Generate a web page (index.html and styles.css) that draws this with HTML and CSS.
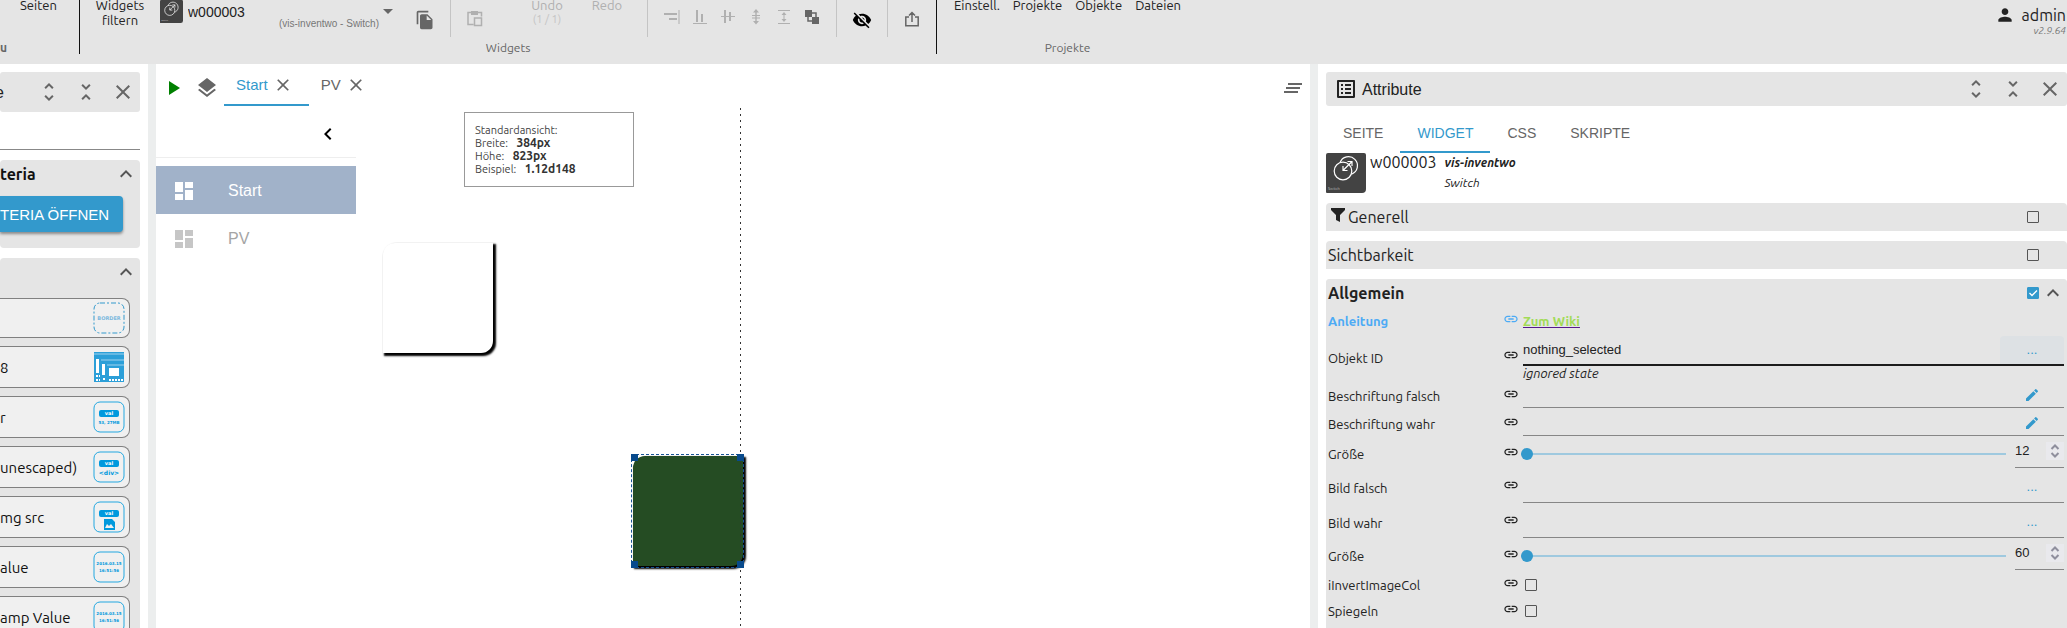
FILE: index.html
```
<!DOCTYPE html>
<html lang="de">
<head>
    <meta charset="UTF-8">
    <meta name="viewport" content="width=device-width, initial-scale=1.0">
    <title>vis-2</title>
    <link rel="stylesheet" href="styles.css">
</head>
<body>
    <svg class="sprite" aria-hidden="true">
        <symbol id="close" viewBox="0 0 24 24"><path d="M19 6.41L17.59 5 12 10.59 6.41 5 5 6.41 10.59 12 5 17.59 6.41 19 12 13.41 17.59 19 19 17.59 13.41 12z"/></symbol>
        <symbol id="more" viewBox="0 0 24 24"><path d="M12 5.83L15.17 9l1.41-1.41L12 3 7.41 7.59 8.83 9 12 5.83zm0 12.34L8.83 15l-1.41 1.41L12 21l4.59-4.59L15.17 15 12 18.17z"/></symbol>
        <symbol id="less" viewBox="0 0 24 24"><path d="M7.41 18.59L8.83 20 12 16.83 15.17 20l1.41-1.41L12 14l-4.59 4.59zm9.18-13.18L15.17 4 12 7.17 8.83 4 7.41 5.41 12 10l4.59-4.59z"/></symbol>
        <symbol id="up" viewBox="0 0 24 24"><path d="M12 8l-6 6 1.41 1.41L12 10.83l4.59 4.58L18 14z"/></symbol>
        <symbol id="left" viewBox="0 0 24 24"><path d="M15.41 7.41L14 6l-6 6 6 6 1.41-1.41L10.83 12z"/></symbol>
        <symbol id="link" viewBox="0 0 24 24"><path d="M3.9 12c0-1.71 1.39-3.1 3.1-3.1h4V7H7c-2.76 0-5 2.24-5 5s2.24 5 5 5h4v-1.9H7c-1.71 0-3.1-1.39-3.1-3.1zM8 13h8v-2H8v2zm9-6h-4v1.9h4c1.71 0 3.1 1.39 3.1 3.1s-1.39 3.1-3.1 3.1h-4V17h4c2.76 0 5-2.24 5-5s-2.24-5-5-5z"/></symbol>
        <symbol id="edit" viewBox="0 0 24 24"><path d="M3 17.25V21h3.75L17.81 9.94l-3.75-3.75L3 17.25zM20.71 7.04c.39-.39.39-1.02 0-1.41l-2.34-2.34a1 1 0 00-1.41 0l-1.83 1.83 3.75 3.75 1.83-1.83z"/></symbol>
        <symbol id="board" viewBox="0 0 24 24"><path d="M3 13h8V3H3v10zm0 8h8v-6H3v6zm10 0h8V11h-8v10zm0-18v6h8V3h-8z"/></symbol>
        <symbol id="switch" viewBox="0 0 40 40">
            <path d="M2 0h36a2 2 0 0 1 2 2v34a4 4 0 0 1-4 4H1a1 1 0 0 1-1-1V2a2 2 0 0 1 2-2z" fill="#434343"/>
            <g fill="none" stroke="#fff" stroke-width="1.2">
                <circle cx="17" cy="18" r="8.800"/>
                <path d="M14 9.700a9 9 0 1 1 11.500 11.500"/>
                <path d="M17 17.500L26 8.500m-4.500 0H26V13M17 13v4.500h4.500"/>
            </g>
            <text x="2" y="37" font-size="4" fill="#bbb">Switch</text>
        </symbol>
    </svg>

    <header class="toolbar">
        <div class="group group-menu">
            <div class="tools"><button class="tool">Seiten</button></div>
            <div class="group-name">u</div>
        </div>
        <div class="group group-widgets">
            <div class="tools">
                <button class="tool tool-filter">Widgets filtern</button>
                <div class="picker">
                    <svg class="picker-icon"><use href="#switch"/></svg>
                    <select class="picker-select" aria-label="Widget">
                        <option>w000003</option>
                    </select>
                    <span class="picker-type">(vis-inventwo - Switch)</span>
                    <svg class="picker-caret" viewBox="0 0 10 5"><path d="M0 0h10L5 5z"/></svg>
                </div>
                <button class="tool tool-icon tool-wide" aria-label="Kopieren">
                    <svg class="icon-20" viewBox="0 0 24 24"><path d="M16 1H4c-1.1 0-2 .9-2 2v14h2V3h12V1zm-1 4l6 6v10c0 1.1-.9 2-2 2H7.99C6.89 23 6 22.1 6 21l.01-14c0-1.1.89-2 1.99-2h7zm-1 7h5.5L14 6.5V12z"/></svg>
                </button>
                <span class="line"></span>
                <button class="tool tool-icon" disabled aria-label="Einfügen">
                    <svg class="icon-18" viewBox="0 0 18 18"><path d="M5.500 2.500H2v12h5.500M12 2.500h3.500v4M8.500 8h7v7.500h-7z" fill="none" stroke="currentColor" stroke-width="1.500"/><path d="M5 1h7v4H5z"/></svg>
                </button>
                <button class="tool tool-undo" disabled>Undo<small>(1 / 1)</small></button>
                <button class="tool tool-redo" disabled>Redo</button>
                <span class="line"></span>
                <div class="aligns">
                    <button class="tool tool-align" disabled aria-label="Rechts ausrichten"><svg class="icon-16" viewBox="0 0 16 16"><path d="M14.500 1h1v14h-1zM0 4h13v2H0zM5 9h8v2H5z"/></svg></button>
                    <button class="tool tool-align" disabled aria-label="Unten ausrichten"><svg class="icon-16" viewBox="0 0 16 16"><path d="M1 14h14v1H1zM4 1h2v12H4zM9 5h2v8H9z"/></svg></button>
                    <button class="tool tool-align" disabled aria-label="Mitte ausrichten"><svg class="icon-16" viewBox="0 0 16 16"><path d="M1 7h14v1H1zM4 1h2v13H4zM9 3h2v9H9z"/></svg></button>
                    <button class="tool tool-align" disabled aria-label="Höhe verteilen"><svg class="icon-16" viewBox="0 0 16 16"><path d="M4 6h8v1H4zM4 8.500h8v1H4zM7.300 3h1.400v10H7.300zM8 0l3 3.500H5zM8 15.500L5 12h6z"/></svg></button>
                    <button class="tool tool-align" disabled aria-label="Gleiche Höhe"><svg class="icon-16" viewBox="0 0 16 16"><path d="M2 1h12v1H2zM2 14h12v1H2zM7.500 5h1v6h-1zM8 3l2.500 3h-5zM8 13l-2.500-3h5z"/></svg></button>
                    <button class="tool tool-align" aria-label="Reihenfolge"><svg class="icon-16" viewBox="0 0 16 16"><path d="M1 1h7v7H1zM8 8h7v7H8z"/><path d="M8 4h4v4M4 8v4h4" fill="none" stroke="currentColor" stroke-width="1.500"/></svg></button>
                </div>
                <span class="line"></span>
                <button class="tool tool-icon tool-eye" aria-label="Ausblenden">
                    <svg class="icon-20" viewBox="0 0 24 24"><path d="M12 7c2.76 0 5 2.24 5 5 0 .65-.13 1.26-.36 1.83l2.92 2.92c1.51-1.26 2.7-2.89 3.43-4.75-1.73-4.39-6-7.5-11-7.5-1.4 0-2.74.25-3.98.7l2.16 2.16C10.74 7.13 11.35 7 12 7zM2 4.27l2.28 2.28.46.46C3.08 8.3 1.78 10.02 1 12c1.73 4.39 6 7.5 11 7.5 1.55 0 3.03-.3 4.38-.84l.42.42L19.73 22 21 20.73 3.27 3 2 4.27zM7.53 9.8l1.55 1.55c-.05.21-.08.43-.08.65 0 1.66 1.34 3 3 3 .22 0 .44-.03.65-.08l1.55 1.55c-.67.33-1.41.53-2.2.53-2.76 0-5-2.24-5-5 0-.79.2-1.53.53-2.2zm4.31-.78l3.15 3.15.02-.16c0-1.66-1.34-3-3-3l-.17.01z"/></svg>
                </button>
                <span class="line"></span>
                <button class="tool tool-icon" aria-label="Exportieren">
                    <svg class="icon-16" viewBox="0 0 16 16"><path d="M5 6H1.800v8.800h12.400V6H11M8 11V2M5 4.500l3-3 3 3" fill="none" stroke="currentColor" stroke-width="1.500"/></svg>
                </button>
            </div>
            <div class="group-name">Widgets</div>
        </div>
        <div class="group group-projects">
            <div class="tools">
                <button class="tool">Einstell.</button>
                <button class="tool">Projekte</button>
                <button class="tool">Objekte</button>
                <button class="tool">Dateien</button>
            </div>
            <div class="group-name">Projekte</div>
        </div>
        <div class="user">
            <svg class="icon-20" viewBox="0 0 24 24"><path d="M12 12c2.21 0 4-1.79 4-4s-1.79-4-4-4-4 1.79-4 4 1.79 4 4 4zm0 2c-2.67 0-8 1.34-8 4v2h16v-2c0-2.66-5.33-4-8-4z"/></svg>
            <div class="user-text">
                <span class="user-name">admin</span>
                <span class="version">v2.9.64</span>
            </div>
        </div>
    </header>

    <main class="workspace">
        <aside class="palette">
            <div class="panel-head palette-head">
                <span class="panel-title">e</span>
                <button class="icon-btn" aria-label="Alle öffnen"><svg class="icon-24"><use href="#more"/></svg></button>
                <button class="icon-btn" aria-label="Alle schließen"><svg class="icon-24"><use href="#less"/></svg></button>
                <button class="icon-btn" aria-label="Schließen"><svg class="icon-24"><use href="#close"/></svg></button>
            </div>
            <input class="search" type="text" aria-label="Suche">
            <section class="set set-first">
                <div class="set-head">
                    <h2>teria</h2>
                    <svg class="icon-24"><use href="#up"/></svg>
                </div>
                <button class="open-btn">TERIA ÖFFNEN</button>
            </section>
            <section class="set">
                <div class="set-head">
                    <h2></h2>
                    <svg class="icon-24"><use href="#up"/></svg>
                </div>
                <ul class="widgets">
                    <li>
                        <span></span>
                        <svg class="thumb" viewBox="0 0 32 32">
                            <rect x="1" y="1" width="30" height="30" rx="6" fill="none" stroke="#3399cc" stroke-dasharray="5 2 2 2"/>
                            <text x="16" y="18" font-size="5" fill="#7db9de">BORDER</text>
                        </svg>
                    </li>
                    <li>
                        <span>8</span>
                        <svg class="thumb" viewBox="0 0 32 32">
                            <path d="M1 1h30v30H1z" fill="#2c9fd8"/>
                            <path d="M1 3h30M8 9h23M14 14h17" stroke="#9ed2ee"/>
                            <path d="M3 8h3v14H3zM9 13h3v11H9zM16 17h10v8H16z" fill="#fff"/>
                            <path d="M3 25h4M3 29h4M10 28h3M16 29h14" stroke="#fff" stroke-width="2" stroke-dasharray="2 1"/>
                        </svg>
                    </li>
                    <li>
                        <span>r</span>
                        <svg class="thumb" viewBox="0 0 32 32">
                            <rect class="thumb-frame" x="1" y="1" width="30" height="30" rx="6"/>
                            <rect x="6" y="9" width="20" height="7" rx="2" fill="#0099dd"/>
                            <text x="16" y="14" font-size="5" fill="#fff">val</text>
                            <text x="16" y="23" font-size="4" fill="#0099dd">53, 27MB</text>
                        </svg>
                    </li>
                    <li>
                        <span>unescaped)</span>
                        <svg class="thumb" viewBox="0 0 32 32">
                            <rect class="thumb-frame" x="1" y="1" width="30" height="30" rx="6"/>
                            <rect x="6" y="9" width="20" height="7" rx="2" fill="#0099dd"/>
                            <text x="16" y="14" font-size="5" fill="#fff">val</text>
                            <text x="16" y="24" font-size="6" fill="#0099dd">&lt;div&gt;</text>
                        </svg>
                    </li>
                    <li>
                        <span>mg src</span>
                        <svg class="thumb" viewBox="0 0 32 32">
                            <rect class="thumb-frame" x="1" y="1" width="30" height="30" rx="6"/>
                            <rect x="6" y="9" width="20" height="7" rx="2" fill="#0099dd"/>
                            <text x="16" y="14" font-size="5" fill="#fff">val</text>
                            <path d="M11 18h8l3 3v8H11zM12 27h9l-3-4-2 2-2-2z" fill="#0099dd" fill-rule="evenodd"/>
                        </svg>
                    </li>
                    <li>
                        <span>alue</span>
                        <svg class="thumb" viewBox="0 0 32 32">
                            <rect class="thumb-frame" x="1" y="1" width="30" height="30" rx="6"/>
                            <text x="16" y="14" font-size="4" fill="#0099dd">2016.03.15</text>
                            <text x="16" y="21" font-size="4" fill="#0099dd">16:51:56</text>
                        </svg>
                    </li>
                    <li>
                        <span>amp Value</span>
                        <svg class="thumb" viewBox="0 0 32 32">
                            <rect class="thumb-frame" x="1" y="1" width="30" height="30" rx="6"/>
                            <text x="16" y="14" font-size="4" fill="#0099dd">2016.03.15</text>
                            <text x="16" y="21" font-size="4" fill="#0099dd">16:51:56</text>
                        </svg>
                    </li>
                </ul>
            </section>
        </aside>

        <div class="splitter"></div>

        <section class="editor">
            <nav class="views">
                <button class="icon-btn play" aria-label="Start"><svg class="icon-24" viewBox="0 0 24 24"><path d="M7 5v14l11-7z"/></svg></button>
                <button class="icon-btn layers" aria-label="Ansichten"><svg class="icon-24" viewBox="0 0 24 24"><path d="M11.99 18.54l-7.37-5.73L3 14.07l9 7 9-7-1.63-1.27-7.38 5.74zM12 16l7.36-5.73L21 9l-9-7-9 7 1.63 1.27L12 16z"/></svg></button>
                <button class="view view-active">Start<svg class="icon-20"><use href="#close"/></svg></button>
                <button class="view">PV<svg class="icon-20"><use href="#close"/></svg></button>
                <button class="icon-btn view-menu" aria-label="Menü"><svg class="icon-24" viewBox="0 0 24 24"><path d="M5 13h14v-2H5v2zm-2 4h14v-2H3v2zM7 7v2h14V7H7z"/></svg></button>
            </nav>
            <div class="canvas">
                <div class="nav-menu">
                    <div class="nav-top">
                        <button class="icon-btn" aria-label="Menü einklappen"><svg class="icon-24"><use href="#left"/></svg></button>
                    </div>
                    <a class="nav-item nav-active" href="#start"><svg class="icon-24"><use href="#board"/></svg>Start</a>
                    <a class="nav-item" href="#pv"><svg class="icon-24"><use href="#board"/></svg>PV</a>
                </div>
                <div class="stage">
                    <div class="info">
                        Standardansicht:<br>
                        Breite: <b>384px</b><br>
                        Höhe: <b>823px</b><br>
                        Beispiel: <b>1.12d148</b>
                    </div>
                    <div class="tile tile-white"></div>
                    <div class="tile tile-green"></div>
                    <div class="limit"></div>
                    <div class="selection">
                        <i class="handle handle-tl"></i>
                        <i class="handle handle-tr"></i>
                        <i class="handle handle-bl"></i>
                        <i class="handle handle-br"></i>
                    </div>
                </div>
            </div>
        </section>

        <div class="splitter"></div>

        <aside class="attributes">
            <div class="panel-head">
                <svg class="icon-24 list-icon" viewBox="0 0 24 24"><path d="M19 5v14H5V5h14m1.1-2H3.9c-.5 0-.9.4-.9.9v16.2c0 .4.4.9.9.9h16.2c.4 0 .9-.5.9-.9V3.9c0-.5-.5-.9-.9-.9zM11 7h6v2h-6V7zm0 4h6v2h-6v-2zm0 4h6v2h-6zM7 7h2v2H7zm0 4h2v2H7zm0 4h2v2H7z"/></svg>
                <span class="panel-title">Attribute</span>
                <button class="icon-btn" aria-label="Alle öffnen"><svg class="icon-24"><use href="#more"/></svg></button>
                <button class="icon-btn" aria-label="Alle schließen"><svg class="icon-24"><use href="#less"/></svg></button>
                <button class="icon-btn" aria-label="Schließen"><svg class="icon-24"><use href="#close"/></svg></button>
            </div>
            <nav class="tabs">
                <button class="tab">SEITE</button>
                <button class="tab tab-active">WIDGET</button>
                <button class="tab">CSS</button>
                <button class="tab">SKRIPTE</button>
            </nav>
            <div class="selected">
                <svg class="selected-icon"><use href="#switch"/></svg>
                <span class="selected-id">w000003</span>
                <div class="selected-type"><b>vis-inventwo</b><span>Switch</span></div>
            </div>

            <label class="bar">
                <svg class="funnel" viewBox="0 0 14 14"><path d="M0 0h14v2L9 7v7l-4-2V7L0 2z"/></svg>
                <span class="bar-name">Generell</span>
                <input type="checkbox">
            </label>
            <label class="bar">
                <span class="bar-name">Sichtbarkeit</span>
                <input type="checkbox">
            </label>

            <section class="fields">
                <label class="bar bar-open">
                    <span class="bar-name">Allgemein</span>
                    <input type="checkbox" checked>
                    <svg class="icon-24"><use href="#up"/></svg>
                </label>
                <div class="field field-help">
                    <span class="field-name">Anleitung</span>
                    <svg class="icon-16"><use href="#link"/></svg>
                    <a class="wiki" href="#wiki">Zum Wiki</a>
                </div>
                <div class="field field-object">
                    <label class="field-name" for="oid">Objekt ID</label>
                    <svg class="icon-16"><use href="#link"/></svg>
                    <div class="control-object">
                        <div class="control control-focus">
                            <input id="oid" type="text" value="nothing_selected">
                            <button class="pick">...</button>
                        </div>
                        <span class="hint">ignored state</span>
                    </div>
                </div>
                <div class="field">
                    <label class="field-name" for="textFalse">Beschriftung falsch</label>
                    <svg class="icon-16"><use href="#link"/></svg>
                    <div class="control">
                        <input id="textFalse" type="text">
                        <button class="pick" aria-label="Bearbeiten"><svg class="icon-16"><use href="#edit"/></svg></button>
                    </div>
                </div>
                <div class="field">
                    <label class="field-name" for="textTrue">Beschriftung wahr</label>
                    <svg class="icon-16"><use href="#link"/></svg>
                    <div class="control">
                        <input id="textTrue" type="text">
                        <button class="pick" aria-label="Bearbeiten"><svg class="icon-16"><use href="#edit"/></svg></button>
                    </div>
                </div>
                <div class="field field-slider">
                    <label class="field-name" for="textSize">Größe</label>
                    <svg class="icon-16"><use href="#link"/></svg>
                    <div class="slider">
                        <input class="range" id="textSize" type="range" min="12" max="200" value="12">
                        <div class="number">
                            <input type="number" value="12" aria-label="Größe">
                            <svg class="spin" viewBox="0 0 17 18"><path d="M5 7l3.500-3.500L12 7M5 11l3.500 3.500L12 11"/></svg>
                        </div>
                    </div>
                </div>
                <div class="field field-image">
                    <label class="field-name" for="imageFalse">Bild falsch</label>
                    <svg class="icon-16"><use href="#link"/></svg>
                    <div class="control">
                        <input id="imageFalse" type="text">
                        <button class="pick">...</button>
                    </div>
                </div>
                <div class="field field-image">
                    <label class="field-name" for="imageTrue">Bild wahr</label>
                    <svg class="icon-16"><use href="#link"/></svg>
                    <div class="control">
                        <input id="imageTrue" type="text">
                        <button class="pick">...</button>
                    </div>
                </div>
                <div class="field field-slider">
                    <label class="field-name" for="imageSize">Größe</label>
                    <svg class="icon-16"><use href="#link"/></svg>
                    <div class="slider">
                        <input class="range" id="imageSize" type="range" min="60" max="200" value="60">
                        <div class="number">
                            <input type="number" value="60" aria-label="Größe">
                            <svg class="spin" viewBox="0 0 17 18"><path d="M5 7l3.500-3.500L12 7M5 11l3.500 3.500L12 11"/></svg>
                        </div>
                    </div>
                </div>
                <div class="field field-check">
                    <label class="field-name" for="invert">iInvertImageCol</label>
                    <svg class="icon-16"><use href="#link"/></svg>
                    <input id="invert" type="checkbox">
                </div>
                <div class="field field-check">
                    <label class="field-name" for="mirror">Spiegeln</label>
                    <svg class="icon-16"><use href="#link"/></svg>
                    <input id="mirror" type="checkbox">
                </div>
            </section>
        </aside>
    </main>
</body>
</html>
```

FILE: styles.css
```
* {
    box-sizing: border-box;
}
body {
    margin: 0;
    height: 100vh;
    overflow: hidden;
    display: flex;
    flex-direction: column;
    background: #fff;
    color: #222;
    font-family: Ubuntu, "Noto Sans", sans-serif;
    font-size: 13px;
}
button, input, select {
    font: inherit;
    color: inherit;
    border: none;
    background: none;
    padding: 0;
    margin: 0;
    min-width: 0;
}
button {
    cursor: pointer;
}
svg {
    fill: currentColor;
    flex: none;
    display: block;
}
.sprite {
    display: none;
}
.icon-16 {
    width: 16px;
    height: 16px;
}
.icon-18 {
    width: 18px;
    height: 18px;
}
.icon-20 {
    width: 20px;
    height: 20px;
}
.icon-24 {
    width: 24px;
    height: 24px;
}
input[type="checkbox"] {
    appearance: none;
    width: 12px;
    height: 12px;
    border: 1px solid #555;
    border-radius: 1px;
    flex: none;
}
input[type="checkbox"]:checked {
    border-color: #3399cc;
    background: #3399cc url("data:image/svg+xml,%3Csvg xmlns='http://www.w3.org/2000/svg' viewBox='0 0 10 10'%3E%3Cpath d='M1.500 5l2.500 2.500 5-5' fill='none' stroke='white' stroke-width='1.300'/%3E%3C/svg%3E");
}

/* toolbar */
.toolbar {
    flex: none;
    height: 64px;
    display: flex;
    background: #e5e5e5;
    overflow: hidden;
}
.group {
    height: 54px;
    display: flex;
    flex-direction: column;
    border-right: 1px solid #111;
}
.group-menu {
    width: 80px;
}
.group-projects {
    border-right: none;
    padding: 0 12px;
}
.group-projects .tools {
    gap: 3px;
}
.tools {
    flex: none;
    height: 37px;
    display: flex;
}
.tool {
    display: block;
    align-self: flex-start;
    margin-top: -2px;
    font-size: 13px;
    line-height: 15px;
    text-align: center;
}
.tool:disabled {
    color: #b0b0b0;
}
.tool small {
    display: block;
    font-size: 11px;
    line-height: 12px;
    color: #c4c4c4;
}
.group-menu .tool {
    margin-left: 20px;
}
.group-projects .tool {
    padding: 0 5px;
}
.group-name {
    line-height: 22px;
    text-align: center;
    color: #666;
    font-size: 12px;
}
.group-menu .group-name {
    text-align: left;
    font-weight: bold;
}
.tool-filter {
    width: 80px;
    padding: 0 14px;
}
.picker {
    width: 234px;
    display: flex;
    font-family: "Liberation Sans", Arial, sans-serif;
}
.picker-icon {
    width: 23px;
    height: 23px;
}
.picker-select {
    appearance: none;
    width: 90px;
    height: 24px;
    margin-left: 5px;
    font-size: 14px;
}
.picker-type {
    font-size: 10px;
    line-height: 48px;
    color: #777;
    white-space: nowrap;
    text-align: right;
    flex: 1;
}
.picker-caret {
    width: 10px;
    height: 5px;
    margin: 9px 1px 0 4px;
    color: #666;
}
.tool-icon {
    width: 48px;
    height: 37px;
    margin-top: 0;
    display: flex;
    align-items: center;
    justify-content: center;
    color: #666;
}
.tool-wide {
    width: 56px;
    height: 40px;
    padding-left: 5px;
}
.tool-eye {
    width: 50px;
    height: 40px;
    color: #000;
}
.tool-undo {
    width: 60px;
    margin-left: 18px;
}
.tool-redo {
    width: 60px;
    margin-right: 10px;
}
.line {
    width: 1px;
    background: #c4c4c4;
}
.aligns {
    display: flex;
    padding: 0 10px;
}
.tool-align {
    width: 28px;
    height: 34px;
    margin-top: 0;
    display: flex;
    align-items: center;
    justify-content: center;
    color: #666;
}
.user {
    margin-left: auto;
    display: flex;
    padding: 5px 1px 0 0;
    gap: 7px;
}
.user-text {
    display: flex;
    flex-direction: column;
    align-items: flex-end;
}
.user-name {
    font-size: 16px;
    line-height: 20px;
}
.version {
    font-size: 10px;
    line-height: 11px;
    font-style: italic;
    color: #777;
}

/* columns */
.workspace {
    flex: 1;
    min-height: 0;
    display: grid;
    grid-template-columns: 148px 8px 1154fr 8px 749fr;
}
.splitter {
    background: #eceeee;
}
.palette, .editor, .attributes {
    min-width: 0;
    min-height: 0;
    overflow: hidden;
}
.palette {
    padding: 8px 8px 0 0;
}
.attributes {
    padding: 8px 0 0 8px;
}
.panel-head {
    height: 34px;
    display: flex;
    align-items: center;
    gap: 13px;
    padding-right: 5px;
    border-radius: 3px;
    background: #e5e5e5;
    font-family: "Liberation Sans", Arial, sans-serif;
}
.palette-head {
    height: 40px;
}
.panel-title {
    flex: 1;
    padding-top: 2px;
    font-size: 16px;
}
.list-icon {
    margin: 0 -9px 0 8px;
}
.icon-btn {
    color: #666;
}

/* widget palette */
.palette-head .panel-title {
    margin-left: -5px;
}
.search {
    display: block;
    width: 100%;
    height: 38px;
    border-bottom: 1px solid #888;
}
.set {
    margin-top: 10px;
    background: #e5e5e5;
    border-radius: 4px;
}
.set-first {
    height: 88px;
}
.set-head {
    height: 28px;
    display: flex;
    align-items: center;
    justify-content: space-between;
    padding-right: 2px;
    color: #555;
}
.set-head h2 {
    margin: 0;
    font-size: 16px;
    line-height: 24px;
    color: #111;
}
.set-first .set-head {
    margin-bottom: 8px;
}
.open-btn {
    display: block;
    width: 123px;
    height: 36px;
    padding-right: 16px;
    text-align: right;
    background: #3399cc;
    color: #fff;
    border-radius: 0 4px 4px 0;
    box-shadow: 0 2px 3px rgba(0, 0, 0, 0.4);
    font-family: "Liberation Sans", Arial, sans-serif;
    font-size: 15px;
    white-space: nowrap;
}
.widgets {
    list-style: none;
    margin: 0;
    padding: 12px 10px 0 0;
    display: flex;
    flex-direction: column;
    gap: 8px;
}
.widgets li {
    height: 42px;
    display: flex;
    align-items: center;
    justify-content: space-between;
    padding-right: 4px;
    border: 1px solid #808080;
    border-left: none;
    border-radius: 0 8px 8px 0;
    background: #f0f0f0;
    font-size: 15px;
    color: #111;
}
.widgets li:first-child {
    height: 40px;
}
.thumb {
    width: 32px;
    height: 32px;
    font-family: "DejaVu Sans", sans-serif;
    font-weight: bold;
    text-anchor: middle;
}
.thumb-frame {
    fill: none;
    stroke: #22a7e0;
}

/* editor */
.editor {
    display: flex;
    flex-direction: column;
}
.views {
    height: 42px;
    display: flex;
    align-items: stretch;
    font-family: "Liberation Sans", Arial, sans-serif;
    font-size: 15px;
    color: #666;
}
.views .icon-btn {
    padding-top: 5px;
}
.play {
    margin-left: 6px;
    color: #008000;
}
.layers {
    margin: 0 5px 0 9px;
}
.view {
    display: flex;
    align-items: center;
    gap: 5px;
    padding: 1px 16px 0 12px;
    border-bottom: 2px solid transparent;
}
.view-active {
    color: #3399cc;
    border-color: #3399cc;
}
.view svg {
    color: #666;
}
.view-menu {
    margin: 0 5px 0 auto;
}
.canvas {
    flex: 1;
    min-height: 0;
    display: flex;
}
.nav-menu {
    width: 200px;
    font-family: "Liberation Sans", Arial, sans-serif;
    font-size: 16px;
}
.nav-top {
    height: 52px;
    margin-bottom: 8px;
    display: flex;
    justify-content: flex-end;
    padding: 4px 16px 0 0;
    border-bottom: 1px solid #eee;
}
.nav-top .icon-btn {
    color: #000;
}
.nav-item {
    height: 48px;
    display: flex;
    align-items: center;
    gap: 32px;
    padding: 2px 0 0 16px;
    color: #a5a5a5;
    text-decoration: none;
}
.nav-item svg {
    color: #c6c6c6;
}
.nav-active, .nav-active svg {
    color: #fff;
}
.nav-active {
    background: #a1b2c9;
}
.stage {
    flex: 1;
    position: relative;
    overflow: hidden;
}
.info {
    position: absolute;
    left: 108px;
    top: 6px;
    width: 170px;
    padding: 11px 10px 10px;
    border: 1px solid #999;
    font-size: 11px;
    line-height: 13px;
    color: #444;
}
.info b {
    margin-left: 6px;
    font-size: 12px;
    line-height: 12px;
    color: #333;
}
.tile {
    position: absolute;
    width: 110px;
    height: 110px;
    border-radius: 12px 0;
    box-shadow: 2px 2px 2px 1px #000;
}
.tile-white {
    left: 27px;
    top: 137px;
    background: #fff;
}
.tile-green {
    left: 277px;
    top: 350px;
    background: #254c23;
}
.limit {
    position: absolute;
    left: 384px;
    top: 2px;
    width: 1px;
    height: 823px;
    background: repeating-linear-gradient(#333 0 2px, transparent 2px 6px);
}
.selection {
    position: absolute;
    left: 275px;
    top: 348px;
    width: 113px;
    height: 114px;
    border: 1px dashed #1a5596;
}
.handle {
    position: absolute;
    width: 7px;
    height: 7px;
    background: #084a8c;
}
.handle-tl, .handle-tr {
    top: -1px;
}
.handle-bl, .handle-br {
    bottom: -1px;
}
.handle-tl, .handle-bl {
    left: -1px;
}
.handle-tr, .handle-br {
    right: -1px;
}

/* attributes */
.tabs {
    height: 47px;
    display: flex;
    font-family: "Liberation Sans", Arial, sans-serif;
    font-size: 14px;
    color: #666;
}
.tab {
    padding: 8px 17px 0;
    border-bottom: 2px solid transparent;
}
.tab-active {
    color: #3399cc;
    border-color: #3399cc;
}
.selected {
    display: flex;
    margin-bottom: 10px;
}
.selected-icon {
    width: 40px;
    height: 40px;
}
.selected-id {
    margin: 0 8px 0 4px;
    font-size: 16px;
    line-height: 18px;
}
.selected-type {
    display: flex;
    flex-direction: column;
    font-size: 12px;
    font-style: italic;
    line-height: 20px;
}
.bar {
    height: 28px;
    margin-bottom: 10px;
    display: flex;
    align-items: center;
    padding: 0 28px 0 2px;
    border-radius: 4px 4px 0 0;
    background: #e5e5e5;
    font-size: 16px;
    line-height: 22px;
}
.bar-name {
    flex: 1;
}
.funnel {
    width: 14px;
    height: 14px;
    margin: 0 3px 4px;
}
.fields {
    background: #e5e5e5;
    border-radius: 4px 4px 0 0;
    height: 100%;
}
.bar-open {
    height: 30px;
    margin: 0;
    padding: 0 2px 2px;
    font-weight: bold;
}
.bar-open .icon-24 {
    margin-left: 2px;
    color: #555;
}
.field {
    height: 28px;
    display: grid;
    grid-template-columns: 175px 20px 1fr;
    align-items: center;
    padding: 0 3px 0 2px;
}
.field > .icon-16 {
    margin-bottom: 5px;
}
.field-help {
    height: 24px;
    color: #4dabf5;
    font-weight: bold;
}
.wiki {
    color: #a2db58;
    text-decoration-color: #551a8b;
}
.field-object {
    height: 49px;
}
.field-slider {
    height: 32px;
}
.field-image {
    height: 35px;
}
.field-check {
    height: 26px;
}
.field-check input {
    margin-left: 2px;
}
.control {
    align-self: stretch;
    display: flex;
    margin-bottom: 2px;
    border-bottom: 1px solid #868686;
}
.control input {
    flex: 1;
    outline: none;
}
.control-focus {
    height: 30px;
    margin: 0;
    border-bottom: 2px solid #1c1c1c;
    font-family: "Liberation Sans", Arial, sans-serif;
}
.hint {
    display: block;
    line-height: 14px;
    font-style: italic;
}
.pick {
    width: 64px;
    display: flex;
    align-items: center;
    justify-content: center;
    color: #3399cc;
    font-family: "Liberation Sans", Arial, sans-serif;
}
.control-focus .pick {
    background: #dde1e4;
    border-radius: 4px 4px 0 0;
}
.slider {
    align-self: stretch;
    display: flex;
    align-items: center;
    gap: 9px;
    margin-left: -2px;
}
.range {
    appearance: none;
    flex: 1;
    height: 12px;
    background: linear-gradient(#9fc9df, #9fc9df) center / 100% 2px no-repeat;
}
.range::-webkit-slider-thumb {
    appearance: none;
    width: 12px;
    height: 12px;
    border-radius: 50%;
    background: #3399cc;
}
.number {
    align-self: stretch;
    width: 49px;
    margin-bottom: 2px;
    padding-bottom: 4px;
    display: flex;
    align-items: center;
    border-bottom: 1px solid #868686;
    font-family: "Liberation Sans", Arial, sans-serif;
}
.number input {
    flex: 1;
    appearance: textfield;
}
.number input::-webkit-inner-spin-button {
    display: none;
}
.spin {
    width: 18px;
    height: 18px;
    background: #e9e9ed;
    fill: none;
    stroke: #8f8f9d;
    stroke-width: 2;
}
```
